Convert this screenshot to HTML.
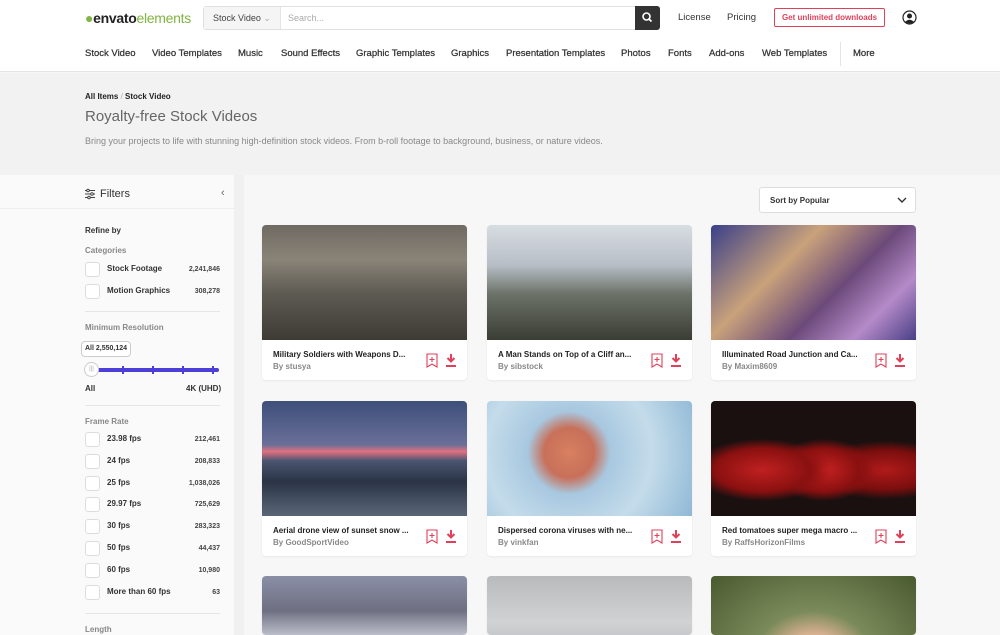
<!DOCTYPE html>
<html><head><meta charset="utf-8"><style>
*{box-sizing:border-box;margin:0;padding:0}
html{width:1000px;height:635px;overflow:hidden}
body{width:1000px;height:635px;overflow:hidden;font-family:"Liberation Sans",sans-serif;background:#f7f7f7;color:#1a1a1a;position:relative}
.abs{position:absolute}
header{position:absolute;left:0;top:0;width:1000px;height:72px;background:#fff;border-bottom:1px solid #e4e4e4}
.nav a{position:absolute;top:48px;font-size:9.5px;color:#333;white-space:nowrap;-webkit-text-stroke:0.25px #333}
.band{position:absolute;top:73px;left:0;width:1000px;height:102px;background:#f2f2f2}
.side{position:absolute;top:175px;left:0;width:234px;height:460px;background:#fafafa}
.strip{position:absolute;top:175px;left:234px;width:10px;height:460px;background:#f0f0f0}
.lbl{position:absolute;left:85px;font-size:8px;color:#888;font-weight:bold}
.row{position:absolute;left:85px;width:135px;height:16px}
.row .cb{position:absolute;left:0;top:0;width:15px;height:15px;border:1px solid #ddd;border-radius:3px;background:#fff}
.row .t{position:absolute;left:22px;top:2px;font-size:8px;font-weight:bold;color:#333}
.row .n{position:absolute;right:0;top:4px;font-size:7px;font-weight:bold;color:#444}
.hr{position:absolute;left:85px;width:135px;height:1px;background:#e6e6e6}
.card{position:absolute;width:205px;height:155px;background:#fff;border-radius:4px;overflow:hidden;box-shadow:0 1px 2px rgba(0,0,0,.06)}
.card .im{height:115px}
.card .ti{position:absolute;left:11px;top:125px;font-size:8px;font-weight:bold;color:#222;white-space:nowrap}
.card .by{position:absolute;left:11px;top:137px;font-size:8px;color:#888;font-weight:bold}
.card svg{position:absolute;top:128px}
</style></head><body>
<header>
  <div class="abs" style="left:85px;top:10px;font-size:14px;letter-spacing:-0.3px"><span style="color:#82b541">●</span><b style="color:#222">envato</b><span style="color:#82b541">elements</span></div>
  <div class="abs" style="left:203px;top:6px;width:457px;height:24px;border:1px solid #e0e0e0;border-radius:3px;background:#fff"></div>
  <div class="abs" style="left:204px;top:7px;width:77px;height:22px;background:#f5f5f5;border-right:1px solid #e4e4e4;font-size:9px;color:#444;padding:6px 0 0 9px">Stock Video <span style="color:#aaa">⌄</span></div>
  <div class="abs" style="left:288px;top:13px;font-size:9px;color:#aaa">Search...</div>
  <div class="abs" style="left:635px;top:6px;width:25px;height:24px;background:#333;border-radius:0 3px 3px 0"><svg width="25" height="24"><circle cx="11.5" cy="10.5" r="3.5" fill="none" stroke="#fff" stroke-width="1.6"/><line x1="14" y1="13" x2="16.5" y2="15.5" stroke="#fff" stroke-width="1.8"/></svg></div>
  <div class="abs" style="left:678px;top:12px;font-size:9.5px;color:#333">License</div>
  <div class="abs" style="left:727px;top:12px;font-size:9.5px;color:#333">Pricing</div>
  <div class="abs" style="left:774px;top:8px;width:111px;height:19px;border:1px solid #e0405a;border-radius:2px;color:#e0405a;font-size:8px;font-weight:bold;text-align:center;line-height:17px">Get unlimited downloads</div>
  <svg class="abs" style="left:902px;top:10px" width="15" height="15"><circle cx="7.5" cy="7.5" r="6.5" fill="#fff" stroke="#222" stroke-width="1.2"/><circle cx="7.5" cy="6" r="2.5" fill="#222"/><path d="M3 12 Q7.5 7.5 12 12 Q7.5 15 3 12Z" fill="#222"/></svg>
  <div class="nav">
    <a style="left:85px">Stock Video</a><a style="left:152px">Video Templates</a><a style="left:238px">Music</a><a style="left:281px">Sound Effects</a><a style="left:356px">Graphic Templates</a><a style="left:451px">Graphics</a><a style="left:506px">Presentation Templates</a><a style="left:621px">Photos</a><a style="left:668px">Fonts</a><a style="left:709px">Add-ons</a><a style="left:762px">Web Templates</a><a style="left:853px">More</a>
  </div>
  <div class="abs" style="left:840px;top:42px;width:1px;height:24px;background:#e4e4e4"></div>
</header>
<div class="band">
  <div class="abs" style="left:85px;top:19px;font-size:8px;font-weight:bold;color:#222">All Items <span style="color:#aaa;font-weight:normal">/</span> Stock Video</div>
  <div class="abs" style="left:85px;top:35px;font-size:15px;color:#666">Royalty-free Stock Videos</div>
  <div class="abs" style="left:85px;top:63px;font-size:9px;color:#888">Bring your projects to life with stunning high-definition stock videos. From b-roll footage to background, business, or nature videos.</div>
</div>
<div class="side"></div><div class="strip"></div>
<svg class="abs" style="left:84px;top:188px" width="12" height="12"><g stroke="#444" stroke-width="1"><line x1="1" y1="2.5" x2="11" y2="2.5"/><line x1="1" y1="6" x2="11" y2="6"/><line x1="1" y1="9.5" x2="11" y2="9.5"/></g><g fill="#fff" stroke="#444"><circle cx="4" cy="2.5" r="1.3"/><circle cx="8" cy="6" r="1.3"/><circle cx="5" cy="9.5" r="1.3"/></g></svg>
<div class="abs" style="left:100px;top:188px;font-size:11px;color:#333">Filters</div>
<div class="abs" style="left:221px;top:187px;font-size:11px;color:#666">‹</div>
<div class="abs" style="left:0;top:208px;width:234px;height:1px;background:#eee"></div>
<div class="lbl" style="top:226px;color:#333">Refine by</div>
<div class="lbl" style="top:246px">Categories</div>
<div class="row" style="top:262px"><div class="cb"></div><div class="t">Stock Footage</div><div class="n">2,241,846</div></div>
<div class="row" style="top:284px"><div class="cb"></div><div class="t">Motion Graphics</div><div class="n">308,278</div></div>
<div class="hr" style="top:311px"></div>
<div class="lbl" style="top:323px">Minimum Resolution</div>
<div class="abs" style="left:81px;top:341px;width:50px;height:16px;border:1px solid #ccc;border-radius:4px;background:#fff;font-size:7px;font-weight:bold;color:#333;text-align:center;line-height:14px">All 2,550,124</div>
<div class="abs" style="left:92px;top:368px;width:127px;height:4px;background:#4b3fd8;border-radius:2px"></div>
<div class="abs" style="left:122px;top:366px;width:2px;height:8px;background:#4b3fd8"></div>
<div class="abs" style="left:152px;top:366px;width:2px;height:8px;background:#4b3fd8"></div>
<div class="abs" style="left:182px;top:366px;width:2px;height:8px;background:#4b3fd8"></div>
<div class="abs" style="left:212px;top:366px;width:2px;height:8px;background:#4b3fd8"></div>
<div class="abs" style="left:84px;top:362px;width:15px;height:15px;border-radius:50%;background:#fff;border:1px solid #ccc;font-size:6px;color:#aaa;text-align:center;line-height:13px">|||</div>
<div class="lbl" style="top:384px;color:#333">All</div>
<div class="lbl" style="top:384px;left:186px;color:#333">4K (UHD)</div>
<div class="hr" style="top:405px"></div>
<div class="lbl" style="top:417px">Frame Rate</div>
<div class="row" style="top:432px"><div class="cb"></div><div class="t">23.98 fps</div><div class="n">212,461</div></div>
<div class="row" style="top:454px"><div class="cb"></div><div class="t">24 fps</div><div class="n">208,833</div></div>
<div class="row" style="top:476px"><div class="cb"></div><div class="t">25 fps</div><div class="n">1,038,026</div></div>
<div class="row" style="top:497px"><div class="cb"></div><div class="t">29.97 fps</div><div class="n">725,629</div></div>
<div class="row" style="top:519px"><div class="cb"></div><div class="t">30 fps</div><div class="n">283,323</div></div>
<div class="row" style="top:541px"><div class="cb"></div><div class="t">50 fps</div><div class="n">44,437</div></div>
<div class="row" style="top:563px"><div class="cb"></div><div class="t">60 fps</div><div class="n">10,980</div></div>
<div class="row" style="top:585px"><div class="cb"></div><div class="t">More than 60 fps</div><div class="n">63</div></div>
<div class="hr" style="top:613px"></div>
<div class="lbl" style="top:625px">Length</div>

<div class="abs" style="left:759px;top:187px;width:157px;height:26px;border:1px solid #ddd;border-radius:3px;background:#fff;font-size:8px;font-weight:bold;color:#333;padding:8px 0 0 10px">Sort by Popular<svg class="abs" style="right:8px;top:8px" width="10" height="8"><path d="M1 2 L5 6 L9 2" fill="none" stroke="#333" stroke-width="1.4"/></svg></div>

<div class="card" style="left:262px;top:225px"><div class="im" style="background:linear-gradient(180deg,#6f6a62 0%,#8a8378 30%,#5d5a52 60%,#3e3b35 100%)"></div><div class="ti">Military Soldiers with Weapons D...</div><div class="by">By stusya</div><svg style="left:164px" width="35" height="16"><path d="M1 1h10v13l-5-3-5 3z" fill="none" stroke="#e0405a" stroke-width="1.1"/><path d="M6 4v5M3.5 6.5h5" stroke="#e0405a" stroke-width="1.1"/><path d="M25 1v7M21.5 5l3.5 3.5 3.5-3.5" fill="none" stroke="#e0405a" stroke-width="2"/><line x1="20" y1="13" x2="30" y2="13" stroke="#e0405a" stroke-width="2"/></svg></div>
<div class="card" style="left:487px;top:225px"><div class="im" style="background:linear-gradient(180deg,#d8dde2 0%,#b7bec6 35%,#6c7268 60%,#3a3d33 100%)"></div><div class="ti">A Man Stands on Top of a Cliff an...</div><div class="by">By sibstock</div><svg style="left:164px" width="35" height="16"><path d="M1 1h10v13l-5-3-5 3z" fill="none" stroke="#e0405a" stroke-width="1.1"/><path d="M6 4v5M3.5 6.5h5" stroke="#e0405a" stroke-width="1.1"/><path d="M25 1v7M21.5 5l3.5 3.5 3.5-3.5" fill="none" stroke="#e0405a" stroke-width="2"/><line x1="20" y1="13" x2="30" y2="13" stroke="#e0405a" stroke-width="2"/></svg></div>
<div class="card" style="left:711px;top:225px"><div class="im" style="background:linear-gradient(135deg,#3a3f8a 0%,#c9a27a 35%,#6b4a7a 60%,#b58ac8 80%,#4a3f86 100%)"></div><div class="ti">Illuminated Road Junction and Ca...</div><div class="by">By Maxim8609</div><svg style="left:164px" width="35" height="16"><path d="M1 1h10v13l-5-3-5 3z" fill="none" stroke="#e0405a" stroke-width="1.1"/><path d="M6 4v5M3.5 6.5h5" stroke="#e0405a" stroke-width="1.1"/><path d="M25 1v7M21.5 5l3.5 3.5 3.5-3.5" fill="none" stroke="#e0405a" stroke-width="2"/><line x1="20" y1="13" x2="30" y2="13" stroke="#e0405a" stroke-width="2"/></svg></div>

<div class="card" style="left:262px;top:401px"><div class="im" style="background:linear-gradient(180deg,#3d4f7a 0%,#6a6f98 38%,#e07080 44%,#4a5570 52%,#2a3445 70%,#5a6678 100%)"></div><div class="ti">Aerial drone view of sunset snow ...</div><div class="by">By GoodSportVideo</div><svg style="left:164px" width="35" height="16"><path d="M1 1h10v13l-5-3-5 3z" fill="none" stroke="#e0405a" stroke-width="1.1"/><path d="M6 4v5M3.5 6.5h5" stroke="#e0405a" stroke-width="1.1"/><path d="M25 1v7M21.5 5l3.5 3.5 3.5-3.5" fill="none" stroke="#e0405a" stroke-width="2"/><line x1="20" y1="13" x2="30" y2="13" stroke="#e0405a" stroke-width="2"/></svg></div>
<div class="card" style="left:487px;top:401px"><div class="im" style="background:radial-gradient(circle at 40% 45%,#d88060 0,#c8705a 18%,#a8c8e0 30%,#c4dcea 60%,#8fb8d6 100%)"></div><div class="ti">Dispersed corona viruses with ne...</div><div class="by">By vinkfan</div><svg style="left:164px" width="35" height="16"><path d="M1 1h10v13l-5-3-5 3z" fill="none" stroke="#e0405a" stroke-width="1.1"/><path d="M6 4v5M3.5 6.5h5" stroke="#e0405a" stroke-width="1.1"/><path d="M25 1v7M21.5 5l3.5 3.5 3.5-3.5" fill="none" stroke="#e0405a" stroke-width="2"/><line x1="20" y1="13" x2="30" y2="13" stroke="#e0405a" stroke-width="2"/></svg></div>
<div class="card" style="left:711px;top:401px"><div class="im" style="background:radial-gradient(ellipse at 25% 60%,#c02020 0,#8a1010 22%,transparent 32%),radial-gradient(ellipse at 55% 60%,#c82222 0,#8a1010 22%,transparent 32%),radial-gradient(ellipse at 85% 60%,#b01a1a 0,#7a0e0e 20%,transparent 30%),#1a1010"></div><div class="ti">Red tomatoes super mega macro ...</div><div class="by">By RaffsHorizonFilms</div><svg style="left:164px" width="35" height="16"><path d="M1 1h10v13l-5-3-5 3z" fill="none" stroke="#e0405a" stroke-width="1.1"/><path d="M6 4v5M3.5 6.5h5" stroke="#e0405a" stroke-width="1.1"/><path d="M25 1v7M21.5 5l3.5 3.5 3.5-3.5" fill="none" stroke="#e0405a" stroke-width="2"/><line x1="20" y1="13" x2="30" y2="13" stroke="#e0405a" stroke-width="2"/></svg></div>

<div class="card" style="left:262px;top:576px;height:59px"><div class="im" style="background:linear-gradient(180deg,#8a8fa6 0%,#6f6f82 30%,#c8ccd6 55%,#9aa0ae 100%)"></div></div>
<div class="card" style="left:487px;top:576px;height:59px"><div class="im" style="background:linear-gradient(180deg,#b8babc 0%,#d0d2d4 40%,#9c9ea2 100%)"></div></div>
<div class="card" style="left:711px;top:576px;height:59px"><div class="im" style="background:radial-gradient(ellipse at 50% 70%,#e8c8a8 0,#d8b090 20%,#7a8a5a 40%,#4a5a30 100%)"></div></div>
</body></html>
